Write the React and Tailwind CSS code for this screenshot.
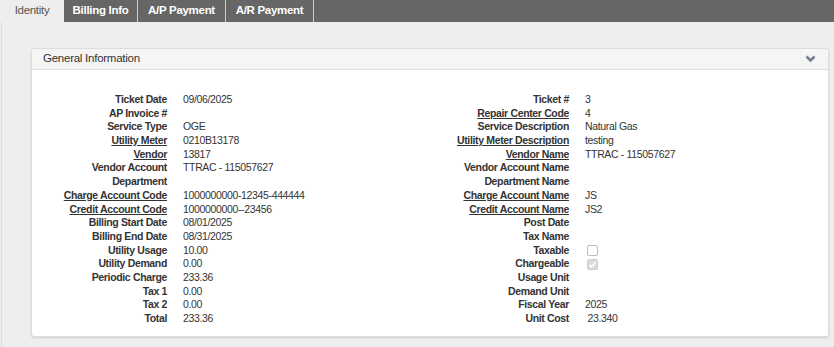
const rows = [
  ["Ticket Date", "09/06/2025", false, "Ticket #", "3", false],
  ["AP Invoice #", "", false, "Repair Center Code", "4", true],
  ["Service Type", "OGE", false, "Service Description", "Natural Gas", false],
  ["Utility Meter", "0210B13178", true, "Utility Meter Description", "testing", true],
  ["Vendor", "13817", true, "Vendor Name", "TTRAC - 115057627", true],
  ["Vendor Account", "TTRAC - 115057627", false, "Vendor Account Name", "", false],
  ["Department", "", false, "Department Name", "", false],
  ["Charge Account Code", "1000000000-12345-444444", true, "Charge Account Name", "JS", true],
  ["Credit Account Code", "1000000000--23456", true, "Credit Account Name", "JS2", true],
  ["Billing Start Date", "08/01/2025", false, "Post Date", "", false],
  ["Billing End Date", "08/31/2025", false, "Tax Name", "", false],
  ["Utility Usage", "10.00", false, "Taxable", "box", false],
  ["Utility Demand", "0.00", false, "Chargeable", "checked", false],
  ["Periodic Charge", "233.36", false, "Usage Unit", "", false],
  ["Tax 1", "0.00", false, "Demand Unit", "", false],
  ["Tax 2", "0.00", false, "Fiscal Year", "2025", false],
  ["Total", "233.36", false, "Unit Cost", " 23.340", false],
];

function Label({ text, link }) {
  return (
    <div className={"text-right pr-4 font-bold whitespace-nowrap " + (link ? "underline underline-offset-[1px]" : "")}>
      {text}
    </div>
  );
}

function Value({ v }) {
  if (v === "box") {
    return (
      <div className="flex items-center h-full">
        <span className="inline-block w-[11px] h-[11px] ml-[2px] rounded-[2px] border border-[#bbb] bg-white"></span>
      </div>
    );
  }
  if (v === "checked") {
    return (
      <div className="flex items-center h-full">
        <span className="inline-flex items-center justify-center w-[11px] h-[11px] ml-[2px] rounded-[2px] border border-[#ccc] bg-[#dcdcdc]">
          <svg width="9" height="9" viewBox="0 0 10 10">
            <path d="M1.5 5.2 L4 7.6 L8.5 2.4" stroke="#fff" strokeWidth="1.6" fill="none" />
          </svg>
        </span>
      </div>
    );
  }
  return <div className="whitespace-pre">{v}</div>;
}

export default function App() {
  return (
    <div className="w-[834px] h-[347px] bg-[#eeeeee] overflow-hidden text-[#333]" style={{ fontFamily: '"Liberation Sans", Arial, sans-serif' }}>
      <div className="flex h-[22px] bg-[#666666] text-[11.5px] tracking-[-0.3px]">
        <div className="w-[64px] bg-[#eeeeee] text-[#555] flex items-center justify-center">Identity</div>
        <div className="w-[74px] text-white font-bold flex items-center justify-center border-r border-[#ccc]">Billing Info</div>
        <div className="w-[88px] text-white font-bold flex items-center justify-center border-r border-[#ccc]">A/P Payment</div>
        <div className="w-[88px] text-white font-bold flex items-center justify-center border-r border-[#ccc]">A/R Payment</div>
      </div>
      <div className="border-l border-[#dcdcdc] ml-[1px] h-full pt-[26px] pl-[29px] pr-[5px]">
        <div className="bg-white border border-[#dddddd] rounded-[3px] shadow-[0_1px_2px_rgba(0,0,0,0.12)]">
          <div className="h-[21px] bg-[#f5f5f5] border-b border-[#dddddd] rounded-t-[3px] flex items-center justify-between pl-[11px] pr-[12px] text-[11.5px] tracking-[-0.25px]">
            <span>General Information</span>
            <svg width="11" height="8" viewBox="0 0 11 8">
              <path d="M1.5 1.5 L5.5 5.5 L9.5 1.5" stroke="#75808c" strokeWidth="2.6" fill="none" />
            </svg>
          </div>
          <div className="grid grid-cols-[151px_246px_156px_1fr] auto-rows-[13.7px] leading-[13.7px] text-[10.5px] tracking-[-0.35px] pt-[23px] pb-[10px]">
            {rows.map((r, i) => (
              <div key={i} className="contents">
                <Label text={r[0]} link={r[2]} />
                <Value v={r[1]} />
                <Label text={r[3]} link={r[5]} />
                <Value v={r[4]} />
              </div>
            ))}
          </div>
        </div>
      </div>
    </div>
  );
}
